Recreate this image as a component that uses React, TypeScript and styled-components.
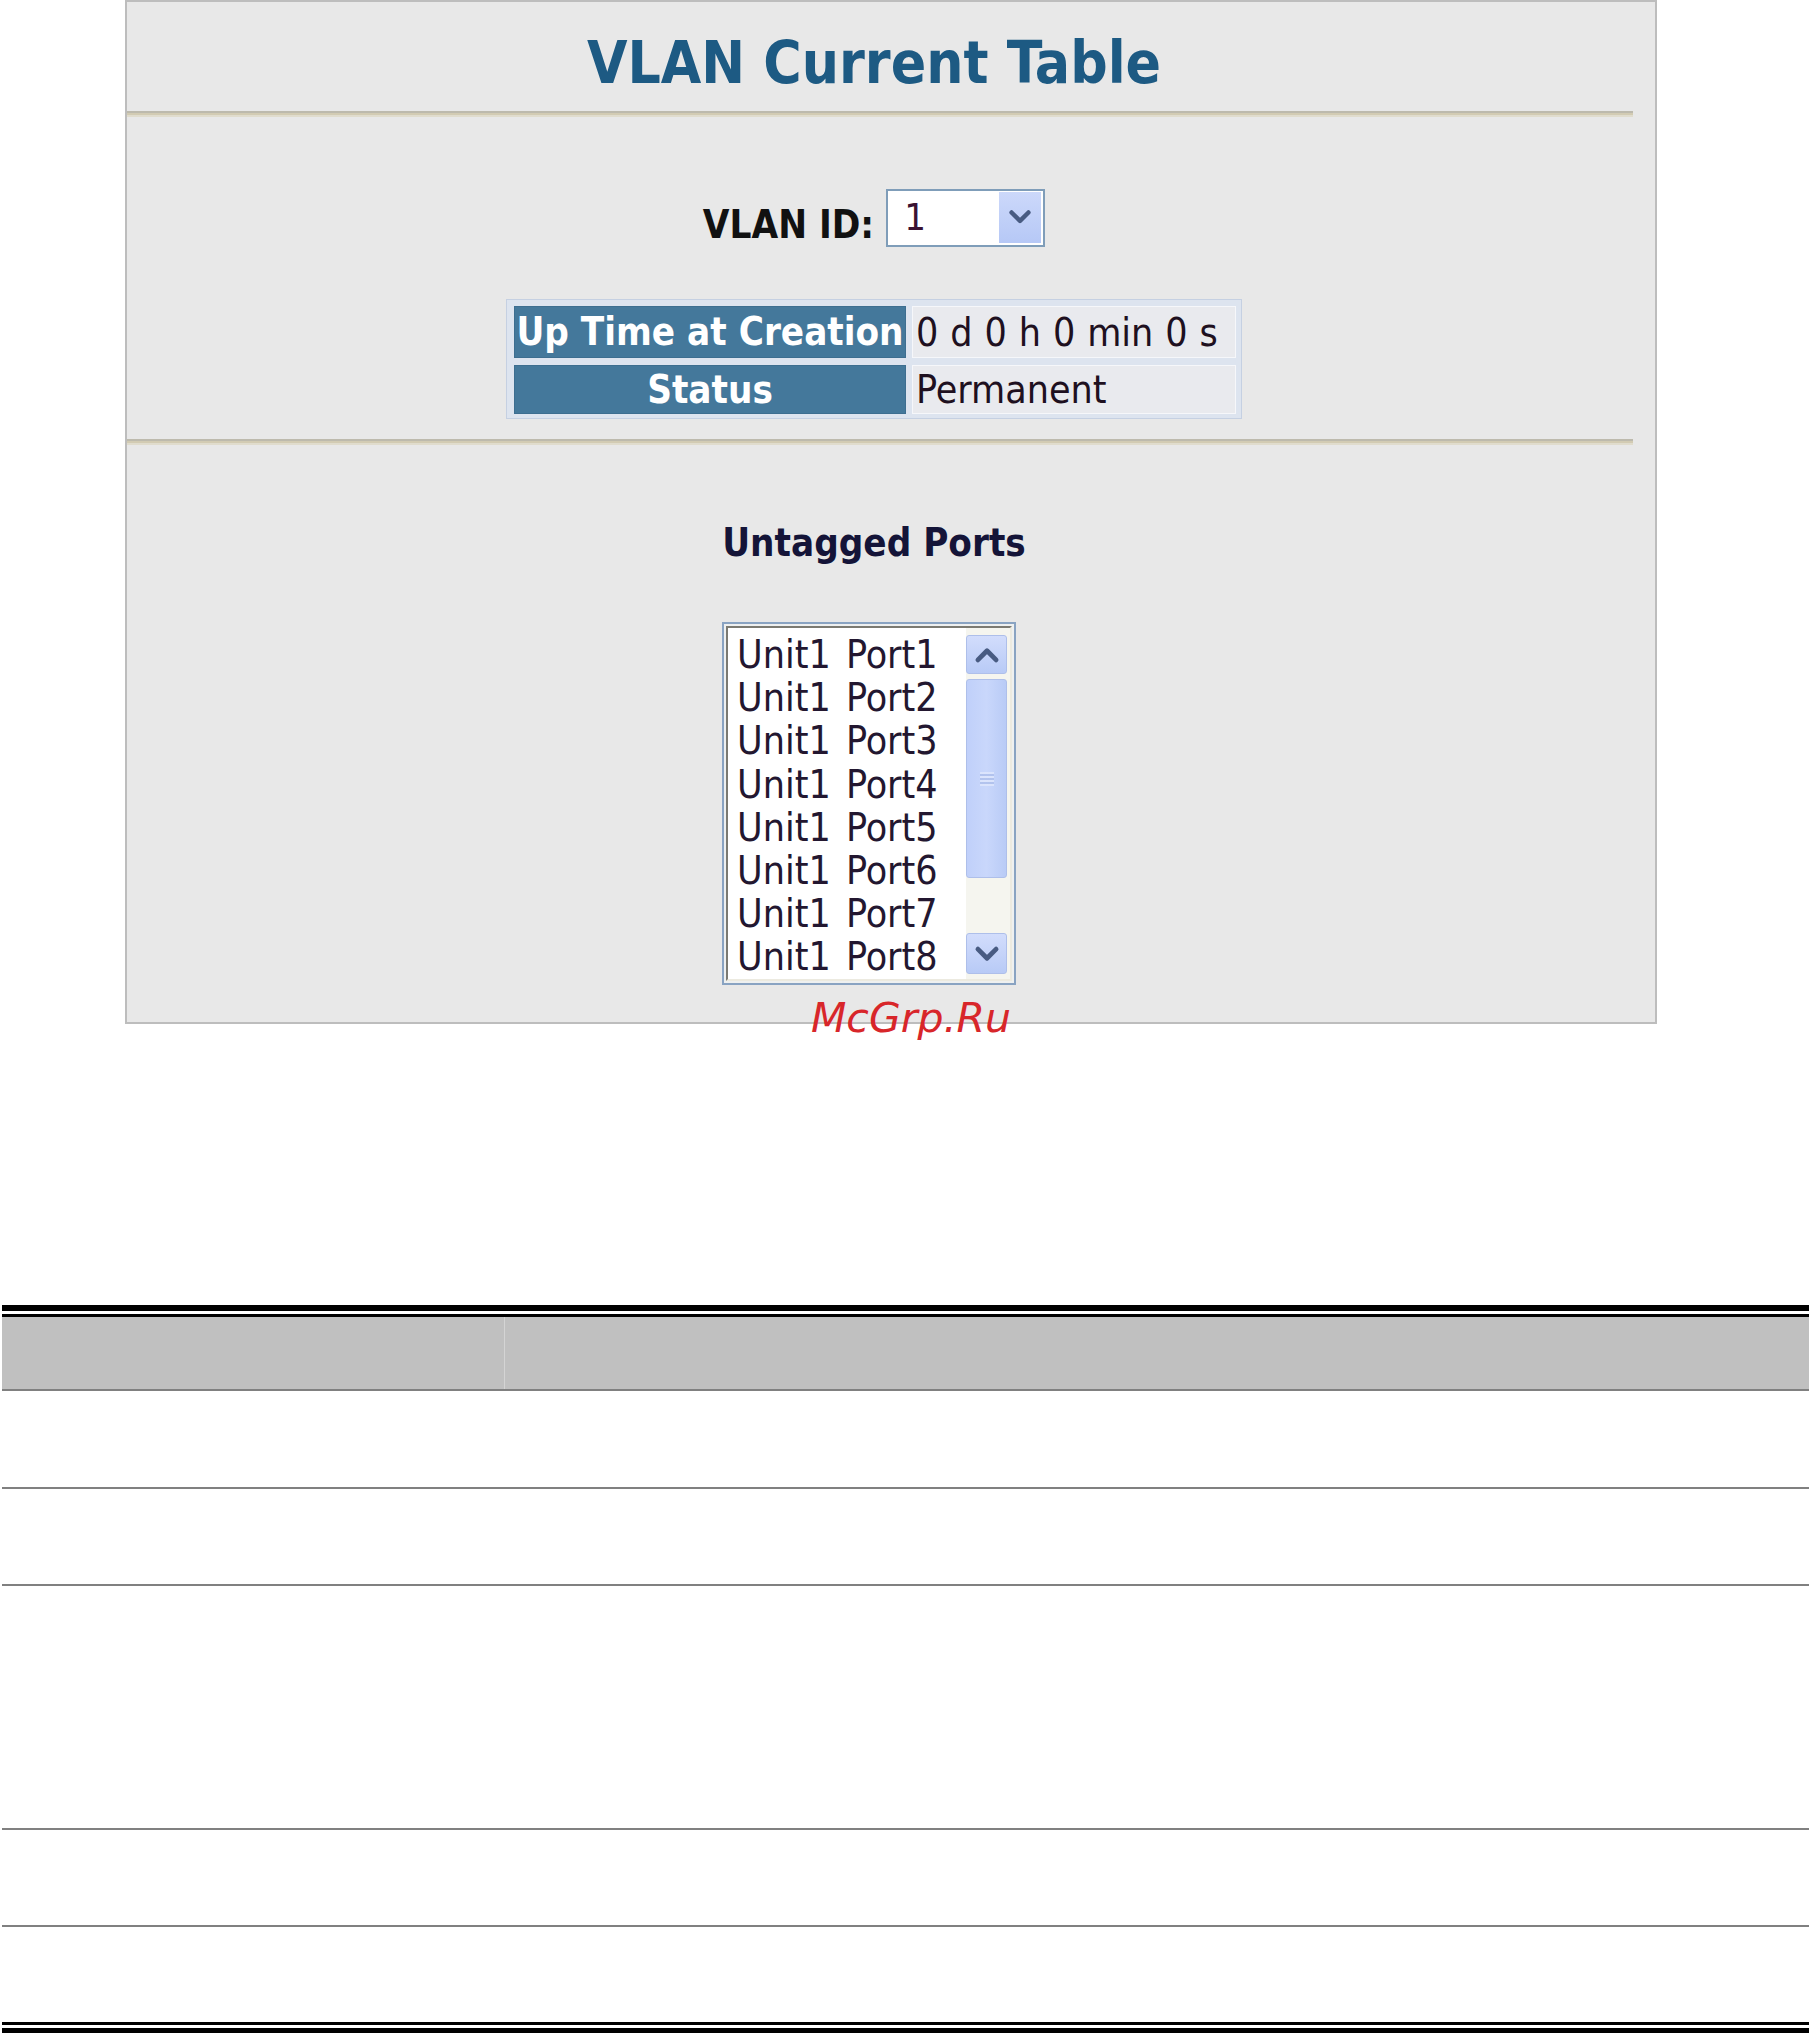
import React from 'react'
import styled, { createGlobalStyle } from 'styled-components'

const GlobalStyle = createGlobalStyle`
  html, body {
    margin: 0;
    padding: 0;
    background: #fff;
  }
  body {
    font-family: "DejaVu Sans Condensed", "DejaVu Sans", Verdana, sans-serif;
  }
`

const ports = Array.from({ length: 8 }, (_, i) => `Unit1 Port${i + 1}`)
const rowHeights = [96, 95, 242, 95, 95]

const Chevron: React.FC<{ dir: 'up' | 'down'; size?: number }> = ({ dir, size = 26 }) => (
  <svg width={size} height={size} viewBox="0 0 20 20">
    <polyline
      points={dir === 'down' ? '3.5,6.5 10,13 16.5,6.5' : '3.5,13.5 10,7 16.5,13.5'}
      fill="none"
      stroke="#485b82"
      strokeWidth={3.4}
      strokeLinecap="round"
      strokeLinejoin="round"
    />
  </svg>
)

const App: React.FC = () => (
  <>
    <GlobalStyle />
    <Page>
      <Panel>
        <TitleBar>
          <Title>VLAN Current Table</Title>
        </TitleBar>
        <Rule />
        <Section $top={71} $bottom={20}>
          <IdRow>
            <Label>VLAN ID:</Label>
            <Select>
              <SelectValue>1</SelectValue>
              <DropButton>
                <Chevron dir="down" size={26} />
              </DropButton>
            </Select>
          </IdRow>
          <InfoTable>
            <HeadCell>Up Time at Creation</HeadCell>
            <ValueCell>0 d 0 h 0 min 0 s</ValueCell>
            <HeadCell>Status</HeadCell>
            <ValueCell>Permanent</ValueCell>
          </InfoTable>
        </Section>
        <Rule />
        <Section $top={74} $bottom={37}>
          <SubTitle>Untagged Ports</SubTitle>
          <ListBox>
            <ListInner>
              <Items>
                {ports.map((p) => (
                  <Item key={p}>{p}</Item>
                ))}
              </Items>
              <ScrollBar>
                <ScrollButton $h={39}>
                  <Chevron dir="up" size={28} />
                </ScrollButton>
                <Thumb>
                  <Grip />
                </Thumb>
                <Track />
                <ScrollButton $h={41}>
                  <Chevron dir="down" size={28} />
                </ScrollButton>
              </ScrollBar>
            </ListInner>
          </ListBox>
        </Section>
      </Panel>
      <Watermark>McGrp.Ru</Watermark>

      <DocTable>
        <DoubleRule $top />
        <HeadRow>
          <HeadCol />
          <HeadCol />
        </HeadRow>
        {rowHeights.map((h, i) => (
          <BodyRow key={i} $h={h} $last={i === rowHeights.length - 1} />
        ))}
        <DoubleRule />
      </DocTable>
    </Page>
  </>
)

const Page = styled.div`
  position: relative;
  width: 1812px;
  height: 2033px;
  overflow: hidden;
`

const Panel = styled.div`
  margin-left: 125px;
  width: 1532px;
  box-sizing: border-box;
  border: 2px solid #bdbdbd;
  background: #e8e8e8;
  display: flex;
  flex-direction: column;
`

const TitleBar = styled.div`
  height: 109px;
  box-sizing: border-box;
  padding: 13px 34px 0 0;
  display: flex;
  align-items: center;
  justify-content: center;
`

const Title = styled.h1`
  margin: 0;
  font-size: 58.2px;
  font-weight: bold;
  color: #1d5a83;
  line-height: 1;
  white-space: nowrap;
`

const Rule = styled.div`
  height: 6px;
  margin-right: 22px;
  background: linear-gradient(#bdbaad 0 2px, #d2cbb3 2px 4px, #e0dccd 4px 6px);
`

const Section = styled.div<{ $top: number; $bottom: number }>`
  display: flex;
  flex-direction: column;
  align-items: center;
  padding: ${(p) => p.$top}px 34px ${(p) => p.$bottom}px 0;
`

const IdRow = styled.div`
  display: flex;
  align-items: center;
  gap: 12px;
`

const Label = styled.span`
  font-size: 38.3px;
  font-weight: bold;
  color: #111;
  padding-top: 14px;
  white-space: nowrap;
`

const Select = styled.div`
  width: 159px;
  height: 58px;
  box-sizing: border-box;
  border: 2px solid #7f9db9;
  background: #fff;
  display: flex;
  align-items: stretch;
  padding: 1px 2px 2px 0;
`

const SelectValue = styled.span`
  flex: 1;
  padding-left: 16px;
  font-size: 38px;
  line-height: 50px;
  color: #3a1232;
`

const DropButton = styled.div`
  width: 42px;
  display: flex;
  align-items: center;
  justify-content: center;
  background: linear-gradient(#ccd8fa, #b6c8f6);
`

const InfoTable = styled.div`
  margin-top: 52px;
  width: 736px;
  height: 120px;
  box-sizing: border-box;
  border: 1px solid #c5d0e2;
  background: #dde4ef;
  padding: 6px 5px 4px 7px;
  display: grid;
  grid-template-columns: 392px 324px;
  grid-template-rows: 52px 49px;
  column-gap: 6px;
  row-gap: 7px;
`

const HeadCell = styled.div`
  background: #44789b;
  border: 1px solid #3d6e90;
  color: #fff;
  font-size: 38.2px;
  font-weight: bold;
  display: flex;
  align-items: center;
  justify-content: center;
  white-space: nowrap;
  overflow: hidden;
`

const ValueCell = styled.div`
  background: #e9eaee;
  border: 1px solid #f6f7fa;
  color: #1e1020;
  font-size: 39px;
  word-spacing: 0.8px;
  padding-left: 3px;
  display: flex;
  align-items: center;
  white-space: nowrap;
`

const SubTitle = styled.h2`
  margin: 0;
  font-size: 38.2px;
  font-weight: bold;
  line-height: 48px;
  color: #141438;
`

const ListBox = styled.div`
  margin: 55px 10px 0 0;
  width: 294px;
  height: 363px;
  box-sizing: border-box;
  border: 2px solid #89a3c2;
  padding: 2px;
  background: #eef0f0;
  display: flex;
`

const ListInner = styled.div`
  flex: 1;
  display: flex;
  border-style: solid;
  border-width: 2px;
  border-color: #7b7a72 #eceae0 #eceae0 #7b7a72;
  background: #fff;
`

const Items = styled.ul`
  flex: 1;
  margin: 0;
  padding: 5px 0 0 9px;
  list-style: none;
`

const Item = styled.li`
  font-size: 39px;
  line-height: 43.2px;
  word-spacing: 4px;
  color: #231730;
  white-space: nowrap;
`

const ScrollBar = styled.div`
  width: 44px;
  box-sizing: border-box;
  padding: 7px 3px 5px 0;
  background: #f5f5ef;
  display: flex;
  flex-direction: column;
`

const ScrollButton = styled.div<{ $h: number }>`
  height: ${(p) => p.$h}px;
  box-sizing: border-box;
  border: 1px solid #aebfea;
  border-radius: 3px;
  background: linear-gradient(#d2ddfc, #b8caf6);
  display: flex;
  align-items: center;
  justify-content: center;
`

const Thumb = styled.div`
  margin-top: 5px;
  height: 199px;
  box-sizing: border-box;
  border: 1px solid #aebfea;
  border-radius: 3px;
  background: linear-gradient(90deg, #c0d0fa, #c9d7fb 50%, #b9cbf6);
  display: flex;
  align-items: center;
  justify-content: center;
`

const Grip = styled.div`
  width: 14px;
  height: 14px;
  background: repeating-linear-gradient(#e3eafd 0 2px, #a9bbe8 2px 4px);
  opacity: 0.7;
`

const Track = styled.div`
  flex: 1;
`

const Watermark = styled.span`
  position: absolute;
  left: 811px;
  top: 994px;
  font-family: "DejaVu Sans", sans-serif;
  font-style: italic;
  font-size: 41px;
  line-height: 48px;
  color: #d8262a;
  white-space: nowrap;
`

const DocTable = styled.div`
  margin: 281px 0 0 2px;
  width: 1807px;
`

const DoubleRule = styled.div<{ $top?: boolean }>`
  height: 3px;
  border-top: ${(p) => (p.$top ? 6 : 3)}px solid #000;
  border-bottom: ${(p) => (p.$top ? 3 : 6)}px solid #000;
`

const HeadRow = styled.div`
  display: grid;
  grid-template-columns: 503px 1fr;
  height: 72px;
  background: #c0c0c0;
  border-bottom: 2px solid #808080;
`

const HeadCol = styled.div`
  &:first-child {
    border-right: 1px solid #d4d4d4;
  }
`

const BodyRow = styled.div<{ $h: number; $last: boolean }>`
  height: ${(p) => p.$h}px;
  border-bottom: ${(p) => (p.$last ? 'none' : '2px solid #808080')};
`

export default App
